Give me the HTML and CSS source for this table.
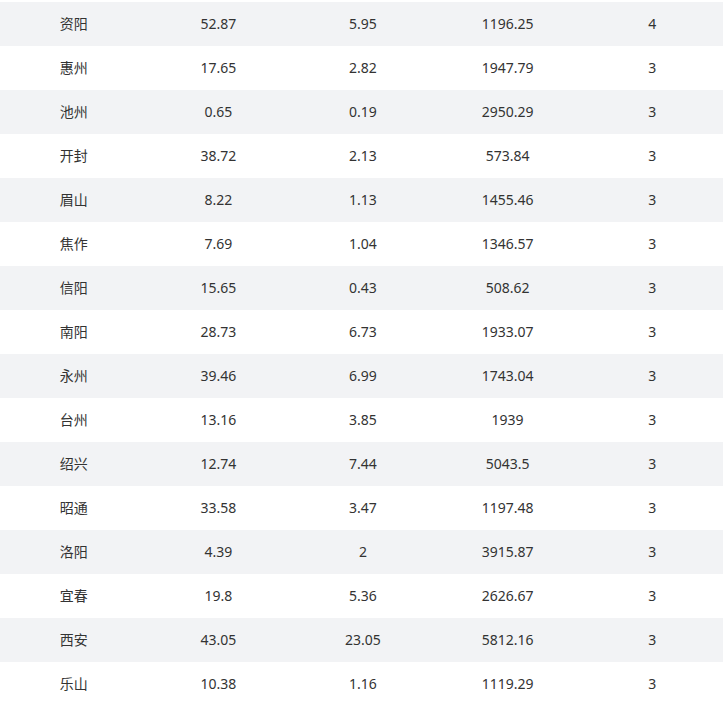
FILE: index.html
```html
<!DOCTYPE html>
<html lang="zh">
<head>
<meta charset="utf-8">
<link rel="stylesheet" href="styles.css">
</head>
<body>
<table class="data">
<tbody>
<tr><td>资阳</td><td>52.87</td><td>5.95</td><td>1196.25</td><td>4</td></tr>
<tr><td>惠州</td><td>17.65</td><td>2.82</td><td>1947.79</td><td>3</td></tr>
<tr><td>池州</td><td>0.65</td><td>0.19</td><td>2950.29</td><td>3</td></tr>
<tr><td>开封</td><td>38.72</td><td>2.13</td><td>573.84</td><td>3</td></tr>
<tr><td>眉山</td><td>8.22</td><td>1.13</td><td>1455.46</td><td>3</td></tr>
<tr><td>焦作</td><td>7.69</td><td>1.04</td><td>1346.57</td><td>3</td></tr>
<tr><td>信阳</td><td>15.65</td><td>0.43</td><td>508.62</td><td>3</td></tr>
<tr><td>南阳</td><td>28.73</td><td>6.73</td><td>1933.07</td><td>3</td></tr>
<tr><td>永州</td><td>39.46</td><td>6.99</td><td>1743.04</td><td>3</td></tr>
<tr><td>台州</td><td>13.16</td><td>3.85</td><td>1939</td><td>3</td></tr>
<tr><td>绍兴</td><td>12.74</td><td>7.44</td><td>5043.5</td><td>3</td></tr>
<tr><td>昭通</td><td>33.58</td><td>3.47</td><td>1197.48</td><td>3</td></tr>
<tr><td>洛阳</td><td>4.39</td><td>2</td><td>3915.87</td><td>3</td></tr>
<tr><td>宜春</td><td>19.8</td><td>5.36</td><td>2626.67</td><td>3</td></tr>
<tr><td>西安</td><td>43.05</td><td>23.05</td><td>5812.16</td><td>3</td></tr>
<tr><td>乐山</td><td>10.38</td><td>1.16</td><td>1119.29</td><td>3</td></tr>
</tbody>
</table>
</body>
</html>
```
FILE: styles.css
```css
html, body {
  margin: 0;
  background: #fff;
}
body {
  padding-top: 2px;
  font-family: "Noto Sans", "Noto Sans CJK SC", sans-serif;
  font-size: 14px;
  color: #333;
}
.data {
  width: 723px;
  table-layout: fixed;
  border-collapse: collapse;
}
.data td {
  height: 44px;
  box-sizing: border-box;
  padding: 0 0 2px 3px;
  text-align: center;
  vertical-align: middle;
}
.data tr:nth-child(odd) {
  background: #f2f3f5;
}
```
